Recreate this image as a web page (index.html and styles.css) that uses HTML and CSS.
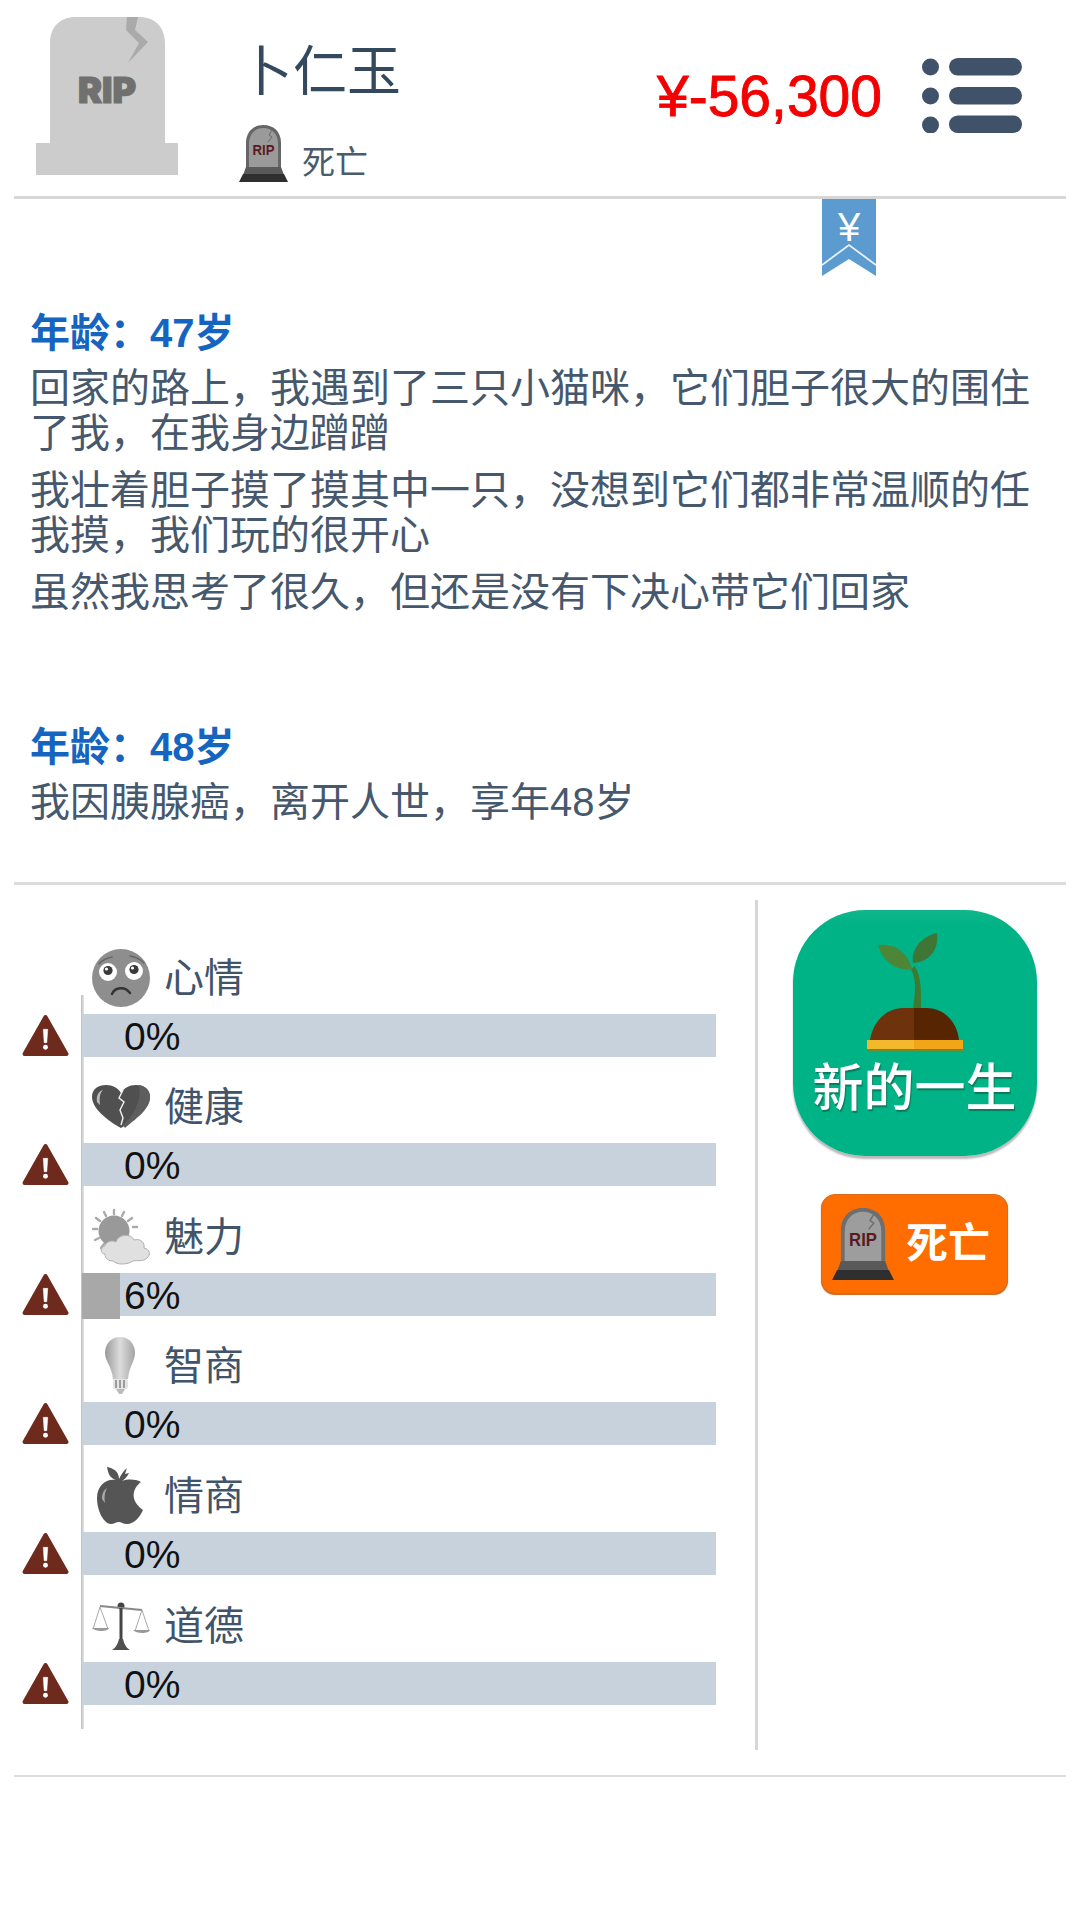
FILE: index.html
```html
<!DOCTYPE html>
<html lang="zh">
<head>
<meta charset="utf-8">
<title>人生</title>
<link rel="stylesheet" href="styles.css">
</head>
<body>
<svg class="defs" width="0" height="0" aria-hidden="true">
  <symbol id="warn" viewBox="0 0 46 42">
    <path d="M23 3 L43.500 39 H2.500 Z" fill="#6e2a1c" stroke="#6e2a1c" stroke-width="4" stroke-linejoin="round"/>
    <path d="M20.800 15 H25.200 L24.300 28 H21.700 Z" fill="#fff" stroke="#fff" stroke-width=".5" stroke-linejoin="round"/>
    <circle cx="23" cy="32.500" r="2.400" fill="#fff"/>
  </symbol>
</svg>

<header class="top">
  <svg class="avatar" viewBox="0 0 142 158" aria-hidden="true">
    <path d="M14 126 V26 C14 10 24 0 40 0 H103 C119 0 129 10 129 26 V126 H142 V158 H0 V126 Z" fill="#cccccc"/>
    <path d="M91 0 H102 L99 13 L112 25 L92 46 L103 26 L90 13 Z" fill="#aaaaaa"/>
    <text x="71" y="86" text-anchor="middle" class="avatar-rip">RIP</text>
  </svg>
  <div class="who">
    <div class="name">卜仁玉</div>
    <div class="status">
      <svg class="status-icon" viewBox="0 0 49 57" aria-hidden="true">
        <path d="M7 48 V18 C7 6 15 0 24.500 0 C34 0 42 6 42 18 V48 Z" fill="#666"/>
        <path d="M10 48 V19 C10 8 17 3 24.500 3 C32 3 39 8 39 19 V48 Z" fill="#9a9a9a"/>
        <path d="M33 5 L30 10 L33 12 L29 17" fill="none" stroke="#6a6a6a" stroke-width="1"/>
        <text x="24.500" y="30" text-anchor="middle" textLength="22" lengthAdjust="spacingAndGlyphs" class="tomb-rip">RIP</text>
        <path d="M7 42 H42 L45 50 H4 Z" fill="#595959"/>
        <path d="M4 49 H45 L49 57 H0 Z" fill="#2f2f2f"/>
      </svg>
      <span class="status-text">死亡</span>
    </div>
  </div>
  <div class="money">¥-56,300</div>
  <svg class="menu" viewBox="0 0 100 75" aria-hidden="true">
    <circle cx="8.500" cy="9" r="8.500"/><circle cx="8.500" cy="38" r="8.500"/><circle cx="8.500" cy="67" r="8.500"/>
    <rect x="27" y="0" width="73" height="17.500" rx="8.750"/><rect x="27" y="29" width="73" height="17.500" rx="8.750"/><rect x="27" y="57.500" width="73" height="17.500" rx="8.750"/>
  </svg>
</header>

<main class="story">
  <svg class="ribbon" viewBox="0 0 54 77" aria-hidden="true">
    <path d="M0 0 H54 V77 L27 60 L0 77 Z" fill="#5b9bd0"/>
    <path d="M0 66 L27 46 L54 66" fill="none" stroke="#e8f2fa" stroke-width="1.800"/>
    <text x="27" y="42" text-anchor="middle" class="ribbon-yen">¥</text>
  </svg>
  <section class="year">
    <h2 class="age">年龄：47岁</h2>
    <p class="line">回家的路上，我遇到了三只小猫咪，它们胆子很大的围住了我，在我身边蹭蹭</p>
    <p class="line">我壮着胆子摸了摸其中一只，没想到它们都非常温顺的任我摸，我们玩的很开心</p>
    <p class="line">虽然我思考了很久，但还是没有下决心带它们回家</p>
  </section>
  <section class="year">
    <h2 class="age">年龄：48岁</h2>
    <p class="line">我因胰腺癌，离开人世，享年48岁</p>
  </section>
</main>

<section class="panel">
  <div class="stats">
    <div class="rail"></div>

    <div class="stat">
      <div class="stat-head">
        <svg class="stat-icon" viewBox="0 0 58 58" aria-hidden="true">
          <circle cx="29" cy="29" r="29" fill="#8e8e8e"/>
          <circle cx="16" cy="23" r="9" fill="#fff"/><circle cx="42" cy="22" r="9" fill="#fff"/>
          <circle cx="16" cy="21.500" r="4.600" fill="#3a3a3a"/><circle cx="42" cy="20.500" r="4.600" fill="#3a3a3a"/>
          <circle cx="14.500" cy="20" r="1.600" fill="#fff"/><circle cx="40.500" cy="19" r="1.600" fill="#fff"/>
          <path d="M7 15 C11 10 15 9 20 8 M38 7 C44 8 48 10 52 14" fill="none" stroke="#666" stroke-width="1.600" stroke-linecap="round"/>
          <path d="M20 45 C23 38 33 37 38 44" fill="none" stroke="#333" stroke-width="2.400" stroke-linecap="round"/>
        </svg>
        <span class="stat-name">心情</span>
      </div>
      <svg class="warn"><use href="#warn"/></svg>
      <div class="bar"><div class="fill" style="width:0%"></div><div class="pct">0%</div></div>
    </div>

    <div class="stat">
      <div class="stat-head">
        <svg class="stat-icon" viewBox="0 0 58 58" aria-hidden="true">
          <path d="M29 50 C20 45 0 32 0 19 C0 11 6 7 14 7 C21 7 26 10 29 15 C32 10 37 7 44 7 C52 7 58 11 58 19 C58 32 38 45 29 50 Z" fill="#505050"/>
          <path d="M33 50 C42 42 58 32 58 19 C58 12 53 8 47 7 C50 22 42 38 31 47 Z" fill="#5e5e5e"/>
          <path d="M31 12 L27 20 L32 24 L28 32 L31 40 L29 47" fill="none" stroke="#f4f4f4" stroke-width="1.400"/>
          <path d="M5 24 C4 17 7 13 11 12 C8 15 7 19 8 27 Z" fill="#bbb"/>
        </svg>
        <span class="stat-name">健康</span>
      </div>
      <svg class="warn"><use href="#warn"/></svg>
      <div class="bar"><div class="fill" style="width:0%"></div><div class="pct">0%</div></div>
    </div>

    <div class="stat">
      <div class="stat-head">
        <svg class="stat-icon" viewBox="0 0 58 58" aria-hidden="true">
          <g stroke="#aaa" stroke-width="2.400" stroke-linecap="round">
            <path d="M22 2 V6 M12 4 L14 8 M32 4 L30 8 M4 10 L8 13 M40 10 L36 13 M1 21 H5 M3 32 L7 30 M9 40 L12 36 M41 19 H45"/>
          </g>
          <circle cx="22" cy="23" r="15.500" fill="#999"/>
          <path d="M13 46 C8 46 8 39 13 38 C14 33 21 32 24 34 C26 26 39 25 42 32 C49 30 53 35 52 40 C58 41 59 47 55 50 C51 54 45 52 41 53 C35 57 25 57 21 53 C17 53 13 51 13 46 Z" fill="#e0e0e0" stroke="#b0b0b0" stroke-width="1"/>
        </svg>
        <span class="stat-name">魅力</span>
      </div>
      <svg class="warn"><use href="#warn"/></svg>
      <div class="bar"><div class="fill" style="width:6%"></div><div class="pct">6%</div></div>
    </div>

    <div class="stat">
      <div class="stat-head">
        <svg class="stat-icon" viewBox="0 0 58 58" aria-hidden="true">
          <defs><linearGradient id="glass" x1="0" x2="1" y1="0" y2="0"><stop offset="0" stop-color="#999"/><stop offset=".5" stop-color="#dcdcdc"/><stop offset="1" stop-color="#a4a4a4"/></linearGradient></defs>
          <path d="M28 0 C18 0 13 8 13 16 C13 24 20 30 21 42 H36 C37 30 43 24 43 16 C43 8 38 0 28 0 Z" fill="url(#glass)"/>
          <rect x="21" y="42" width="15" height="10" rx="2" fill="#e4e4e4"/>
          <path d="M24 43 V51 M28 43 V51 M32 43 V51" stroke="#8a8a8a" stroke-width="1.600"/>
          <path d="M24 52 H33 L30 57 H27 Z" fill="#bbb"/>
        </svg>
        <span class="stat-name">智商</span>
      </div>
      <svg class="warn"><use href="#warn"/></svg>
      <div class="bar"><div class="fill" style="width:0%"></div><div class="pct">0%</div></div>
    </div>

    <div class="stat">
      <div class="stat-head">
        <svg class="stat-icon" viewBox="0 0 58 58" aria-hidden="true">
          <path d="M24 13 C17 11 16 5 15 0 C21 1 27 4 27 12 C29 8 31 4 35 1 L33 7 L37 6 C35 10 33 12 30 14 C36 12 43 12 49 15 C42 20 36 32 51 43 C48 50 42 57 35 57 C31 57 29 55 27 55 C24 55 22 57 19 57 C12 57 5 44 5 31 C5 18 15 11 24 13 Z" fill="#555"/>
          <path d="M10 32 C10 26 12 23 15 21 C13 25 12 29 13 36 Z" fill="#aaa"/>
        </svg>
        <span class="stat-name">情商</span>
      </div>
      <svg class="warn"><use href="#warn"/></svg>
      <div class="bar"><div class="fill" style="width:0%"></div><div class="pct">0%</div></div>
    </div>

    <div class="stat">
      <div class="stat-head">
        <svg class="stat-icon" viewBox="0 0 58 58" aria-hidden="true">
          <circle cx="29" cy="9" r="3.500" fill="#444"/>
          <path d="M8 9 L50 13" stroke="#888" stroke-width="2"/>
          <path d="M27.500 11 H30.500 V42 H27.500 Z" fill="#444"/>
          <path d="M20 53 C24 51 26 46 27 42 H31 C32 46 34 51 38 53 Z" fill="#505050"/>
          <path d="M8 10 L1 32 M8 10 L16 32 M50 13 L43 34 M50 13 L57 34" fill="none" stroke="#aaa" stroke-width="1"/>
          <path d="M0 31 H17 C16 35 3 35 0 31 Z M41 33 H58 C57 37 44 37 41 33 Z" fill="#999"/>
        </svg>
        <span class="stat-name">道德</span>
      </div>
      <svg class="warn"><use href="#warn"/></svg>
      <div class="bar"><div class="fill" style="width:0%"></div><div class="pct">0%</div></div>
    </div>
  </div>

  <div class="actions">
    <div class="rebirth">
      <svg class="sprout" viewBox="0 0 96 119" aria-hidden="true">
        <path d="M46 76 C48 60 50 48 44 36 L48 33 C55 46 54 60 54 76 Z" fill="#3f7a33"/>
        <path d="M11 12 C24 10 40 16 45 36 C30 38 16 30 11 12 Z" fill="#4d8636"/>
        <path d="M70 0 C72 15 64 29 46 30 C44 16 54 4 70 0 Z" fill="#3f7636"/>
        <path d="M3 107 C6 88 20 75 36 75 H47 V107 Z" fill="#6e330d"/>
        <path d="M47 75 H60 C76 75 90 88 92 107 H47 Z" fill="#582503"/>
        <rect x="0" y="107" width="47" height="9" fill="#f3b92c"/>
        <rect x="47" y="107" width="49" height="9" fill="#f2a516"/>
        <rect x="0" y="116" width="96" height="2" fill="#6e8a2a"/>
      </svg>
      <div class="rebirth-text">新的一生</div>
    </div>
    <div class="dead">
      <svg class="dead-icon" viewBox="0 0 49 57" aria-hidden="true">
        <path d="M7 48 V18 C7 6 15 0 24.500 0 C34 0 42 6 42 18 V48 Z" fill="#6e6e6e"/>
        <path d="M10 48 V19 C10 8 17 3 24.500 3 C32 3 39 8 39 19 V48 Z" fill="#9d9d9d"/>
        <path d="M33 5 L30 10 L33 12 L29 17" fill="none" stroke="#6a6a6a" stroke-width="1"/>
        <text x="24.500" y="30" text-anchor="middle" textLength="22" lengthAdjust="spacingAndGlyphs" class="tomb-rip">RIP</text>
        <path d="M7 42 H42 L45 50 H4 Z" fill="#595959"/>
        <path d="M4 49 H45 L49 57 H0 Z" fill="#2f2f2f"/>
      </svg>
      <span class="dead-text">死亡</span>
    </div>
  </div>
</section>
</body>
</html>
```

FILE: styles.css
```css
* { box-sizing: border-box; }

html, body { margin: 0; padding: 0; }

body {
  width: 1080px;
  height: 1920px;
  padding: 0 14px;
  background: #fff;
  color: #34495e;
  font-family: "Liberation Sans", "Noto Sans CJK SC", sans-serif;
  overflow: hidden;
}

.defs { position: absolute; }

.tomb-rip {
  font-family: "Liberation Sans", sans-serif;
  font-size: 15px;
  font-weight: 700;
  fill: #5a1a22;
}

.top {
  display: flex;
  align-items: flex-start;
  height: 199px;
  border-bottom: 3px solid #d6d6d6;
}

.avatar {
  width: 142px;
  height: 158px;
  margin: 17px 0 0 22px;
  flex: none;
}

.avatar-rip {
  font-family: Inter, "Liberation Sans", sans-serif;
  font-size: 36px;
  font-weight: 900;
  fill: #707070;
  stroke: #707070;
  stroke-width: 1.2px;
}

.who {
  display: flex;
  flex-direction: column;
  margin: 0 0 0 61px;
  flex: none;
}

.name {
  font-size: 54px;
  line-height: 72px;
  margin: 36px 0 0 0;
}

.status {
  display: flex;
  align-items: flex-end;
  gap: 14px;
  margin-top: 17px;
}

.status-icon { width: 49px; height: 57px; flex: none; }

.status-text {
  font-size: 33px;
  line-height: 38px;
  color: #4a5b6c;
}

.money {
  margin: 62px 0 0 auto;
  color: #f30000;
  font-size: 57px;
  line-height: 68px;
  white-space: nowrap;
  -webkit-text-stroke: 0.9px #f30000;
}

.menu {
  width: 100px;
  height: 75px;
  margin: 58px 44px 0 40px;
  fill: #3f5269;
  flex: none;
}

.story {
  position: relative;
  display: flex;
  flex-direction: column;
  gap: 109px;
  padding: 111px 16px 57px;
  border-bottom: 3px solid #dcdcdc;
}

.ribbon {
  position: absolute;
  top: 0;
  left: 808px;
  width: 54px;
  height: 77px;
}

.ribbon-yen {
  font-family: "Liberation Sans", sans-serif;
  font-size: 40px;
  fill: #fff;
}

.year {
  display: flex;
  flex-direction: column;
  gap: 9px;
}

.age {
  margin: 0;
  font-size: 40px;
  line-height: 47px;
  font-weight: 700;
  color: #1565c0;
}

.line {
  margin: 0;
  font-size: 40px;
  line-height: 45px;
  color: #46586d;
}

.year .line + .line { margin-top: 3px; }

.panel {
  display: flex;
  padding: 15px 0 25px;
  border-bottom: 2px solid #dcdcdc;
}

.stats {
  position: relative;
  flex: none;
  width: 744px;
  height: 850px;
  padding-top: 27px;
  border-right: 3px solid #d6d6d6;
}

.rail {
  position: absolute;
  left: 67px;
  top: 95px;
  width: 3px;
  height: 734px;
  background: linear-gradient(to right, #bdbdbd, #e6e6e6);
}

.stat {
  display: grid;
  grid-template-columns: 68px 634px;
  grid-template-rows: 86.6px 43px;
}

.stat-head {
  grid-column: 2;
  grid-row: 1;
  display: flex;
  align-items: flex-end;
  gap: 14px;
  padding: 0 0 7px 10px;
}

.stat-icon { width: 58px; height: 58px; flex: none; }

.stat-name {
  font-size: 40px;
  line-height: 58px;
  color: #41546a;
}

.warn {
  grid-column: 1;
  grid-row: 2;
  width: 47px;
  height: 43px;
  margin-left: 8px;
}

.bar {
  grid-column: 2;
  grid-row: 2;
  display: grid;
  background: #c8d2dd;
  position: relative;
  z-index: 1;
}

.fill {
  grid-area: 1 / 1;
  background: #a8a8a8;
}

.pct {
  grid-area: 1 / 1;
  padding-left: 42px;
  font-size: 39px;
  line-height: 46px;
  color: #111;
}

.actions {
  flex: 1;
  display: flex;
  flex-direction: column;
  align-items: center;
  padding: 10px 0 0 5px;
  gap: 38px;
}

.rebirth {
  display: flex;
  flex-direction: column;
  align-items: center;
  width: 244px;
  height: 246px;
  padding-top: 23px;
  border-radius: 72px;
  background: linear-gradient(#12b68d 0, #00b386 14px);
  box-shadow: 0 3px 2px #b9b9b9;
}

.sprout { width: 96px; height: 119px; flex: none; }

.rebirth-text {
  margin-top: 6px;
  color: #fff;
  font-size: 51px;
  line-height: 62px;
  font-weight: 500;
  white-space: nowrap;
  text-shadow: 1px 2px 1px #0a7a5e;
}

.dead {
  display: flex;
  align-items: center;
  gap: 12px;
  width: 187px;
  height: 100px;
  padding-left: 10px;
  border-radius: 14px;
  background: #ff6d00;
  border: 1px solid #d86a1a;
  box-shadow: 0 1px 1px #c96412;
}

.dead-icon { width: 62px; height: 72px; flex: none; }

.dead-text {
  color: #fff;
  font-size: 42px;
  line-height: 50px;
  font-weight: 700;
}
```
